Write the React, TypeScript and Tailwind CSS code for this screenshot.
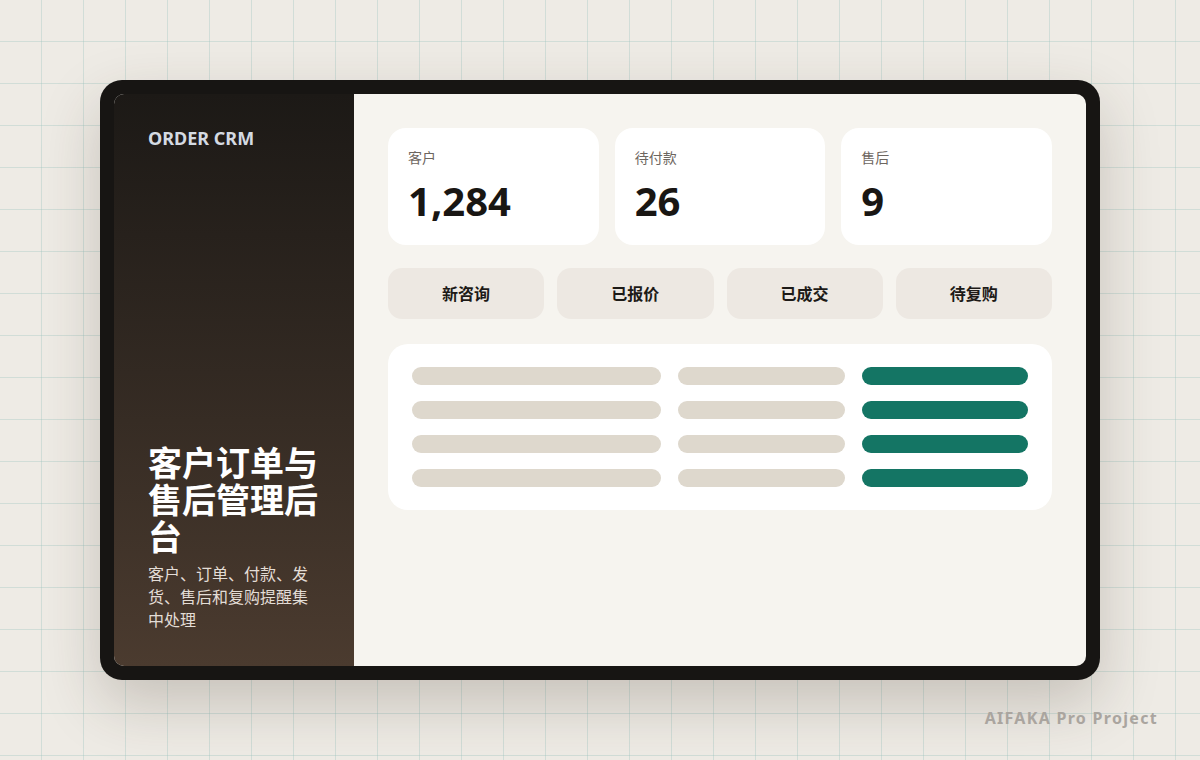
const stats = [
  { label: "客户", value: "1,284" },
  { label: "待付款", value: "26" },
  { label: "售后", value: "9" },
];

const stages = ["新咨询", "已报价", "已成交", "待复购"];

const rows = [0, 1, 2, 3];

export default function App() {
  return (
    <div
      className="relative w-[1200px] h-[760px] overflow-hidden bg-[#eeebe5] flex items-center justify-center"
      style={{
        fontFamily: '"Noto Sans", "Noto Sans CJK SC", sans-serif',
        backgroundImage:
          "linear-gradient(to right, transparent 41px, rgba(155,195,190,0.35) 41px, rgba(155,195,190,0.35) 42px), linear-gradient(to bottom, transparent 41px, rgba(155,195,190,0.35) 41px, rgba(155,195,190,0.35) 42px)",
        backgroundSize: "42px 42px",
      }}
    >
      <div className="w-[1000px] h-[600px] rounded-[22px] bg-[#171513] p-[14px] shadow-[0_24px_60px_rgba(60,45,30,0.22)]">
        <div className="flex h-full rounded-[10px] overflow-hidden bg-[#f6f4ef]">
          <aside className="w-[240px] shrink-0 flex flex-col justify-between p-[34px] pt-[31px] bg-gradient-to-b from-[#1c1916] to-[#4b3b2f]">
            <div className="text-[18px] font-bold text-[#d4dae2]">ORDER CRM</div>
            <div>
              <h1 className="text-[34px] leading-[37px] font-bold text-white">客户订单与售后管理后台</h1>
              <p className="mt-[7px] text-[16px] leading-[23px] text-[#e3ddd6]">
                客户、订单、付款、发货、售后和复购提醒集中处理
              </p>
            </div>
          </aside>

          <main className="flex-1 p-[34px]">
            <div className="grid grid-cols-3 gap-[16px]">
              {stats.map((s) => (
                <div key={s.label} className="h-[117px] rounded-[18px] bg-white px-[20px] pt-[19px]">
                  <div className="text-[14px] text-[#6d6660]">{s.label}</div>
                  <div className="mt-[9px] text-[40px] leading-[48px] font-bold text-[#191613]">{s.value}</div>
                </div>
              ))}
            </div>

            <div className="mt-[23px] grid grid-cols-4 gap-[13px]">
              {stages.map((t) => (
                <div
                  key={t}
                  className="h-[51px] rounded-[14px] bg-[#ede8e2] flex items-center justify-center text-[16px] font-bold text-[#1d1a17]"
                >
                  {t}
                </div>
              ))}
            </div>

            <div className="mt-[25px] rounded-[20px] bg-white px-[24px] pt-[23px] pb-[23px] flex flex-col gap-[16px]">
              {rows.map((r) => (
                <div key={r} className="grid grid-cols-[1.5fr_1fr_1fr] gap-[17px]">
                  <div className="h-[18px] rounded-full bg-[#ded8cd]" />
                  <div className="h-[18px] rounded-full bg-[#ded8cd]" />
                  <div className="h-[18px] rounded-full bg-[#147564]" />
                </div>
              ))}
            </div>
          </main>
        </div>
      </div>

      <div className="absolute right-[42px] bottom-[30px] text-[16px] font-bold tracking-[1.3px] text-[#aaa59f]">
        AIFAKA Pro Project
      </div>
    </div>
  );
}
